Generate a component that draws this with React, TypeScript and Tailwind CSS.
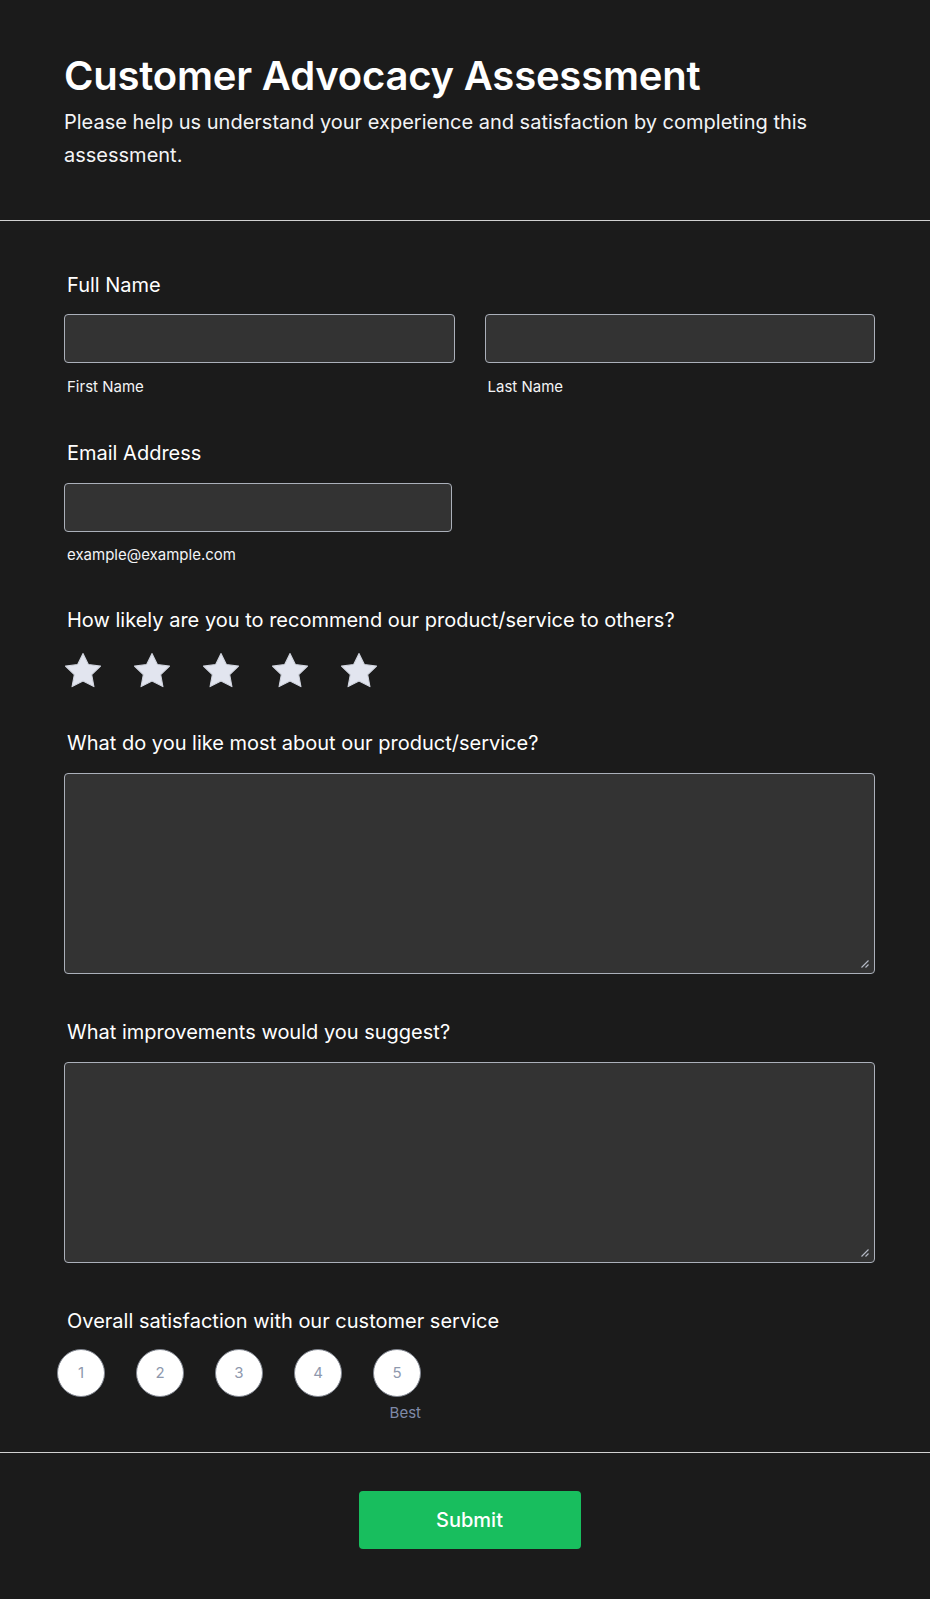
import React from "react";

const font = { fontFamily: "Inter, 'Noto Sans', sans-serif" };

function Star() {
  return (
    <svg width="42" height="40" viewBox="0 0 24 23" className="shrink-0">
      <path
        d="M12 1.4l3.1 6.4 7 .9-5.1 4.9 1.3 6.9L12 17.2l-6.3 3.3 1.3-6.9-5.1-4.9 7-.9z"
        fill="#e2e5ef"
        stroke="#d0d4de"
        strokeWidth="0.6"
        strokeLinejoin="round"
      />
    </svg>
  );
}

function Grip() {
  return (
    <svg
      width="10"
      height="10"
      viewBox="0 0 10 10"
      className="pointer-events-none absolute bottom-[5px] right-[5px]"
    >
      <path d="M1.5 8.5L8.5 1.5M5.5 8.5L8.5 5.5" stroke="#b4b9c4" strokeWidth="1.2" />
    </svg>
  );
}

function TextArea({ className }: { className: string }) {
  return (
    <div className={`relative ${className}`}>
      <textarea className="block h-[201px] w-full resize-none rounded-[4px] border border-[#abb0ba] bg-[#333333] p-3 text-white outline-none" />
      <Grip />
    </div>
  );
}

export default function App() {
  const ratings = [1, 2, 3, 4, 5];

  return (
    <div className="min-h-[1599px] w-[930px] bg-[#1b1b1b] text-white" style={font}>
      {/* Header */}
      <div className="pl-16 pr-[55px] pt-[52px] pb-[48px]">
        <h1 className="text-[40px] font-semibold leading-[48px] tracking-[-0.2px]">
          Customer Advocacy Assessment
        </h1>
        <p className="mt-[6px] text-[20px] leading-[33px] text-[#f3f4f6]">
          Please help us understand your experience and satisfaction by completing this assessment.
        </p>
      </div>

      <div className="h-px bg-[#d1d1d1]" />

      {/* Form */}
      <div className="pl-16 pr-[55px] pt-[50px] pb-[30px]">
        {/* Full name */}
        <div>
          <label className="block pl-[3px] text-[20px] leading-[28px]">Full Name</label>
          <div className="mt-[15px] grid grid-cols-2 gap-[30px]">
            <div>
              <input className="block h-[49px] w-full rounded-[4px] border border-[#abb0ba] bg-[#333333] px-3 text-white outline-none" />
              <div className="mt-[14px] pl-[3px] text-[15px] leading-[20px] text-[#f3f4f6]">First Name</div>
            </div>
            <div>
              <input className="block h-[49px] w-full rounded-[4px] border border-[#abb0ba] bg-[#333333] px-3 text-white outline-none" />
              <div className="mt-[14px] pl-[3px] text-[15px] leading-[20px] text-[#f3f4f6]">Last Name</div>
            </div>
          </div>
        </div>

        {/* Email */}
        <div className="mt-[42px]">
          <label className="block pl-[3px] text-[20px] leading-[28px]">Email Address</label>
          <div className="mt-[16px] w-[388px]">
            <input className="block h-[49px] w-full rounded-[4px] border border-[#abb0ba] bg-[#333333] px-3 text-white outline-none" />
            <div className="mt-[13px] pl-[3px] text-[15px] leading-[20px] text-[#f3f4f6]">example@example.com</div>
          </div>
        </div>

        {/* Stars */}
        <div className="mt-[41px]">
          <label className="block pl-[3px] text-[20px] leading-[28px]">
            How likely are you to recommend our product/service to others?
          </label>
          <div className="-ml-[2px] mt-[17px] flex gap-[27px]">
            {ratings.map((r) => (
              <Star key={r} />
            ))}
          </div>
        </div>

        {/* Like most */}
        <div className="mt-[38px]">
          <label className="block pl-[3px] text-[20px] leading-[28px]">
            What do you like most about our product/service?
          </label>
          <TextArea className="mt-[16px]" />
        </div>

        {/* Improvements */}
        <div className="mt-[44px]">
          <label className="block pl-[3px] text-[20px] leading-[28px]">
            What improvements would you suggest?
          </label>
          <TextArea className="mt-[16px]" />
        </div>

        {/* Satisfaction */}
        <div className="mt-[44px]">
          <label className="block pl-[3px] text-[20px] leading-[28px]">
            Overall satisfaction with our customer service
          </label>
          <div className="-ml-[7px] mt-[14px] inline-flex flex-col">
            <div className="flex gap-[31px]">
              {ratings.map((r) => (
                <button
                  key={r}
                  className="flex h-[48px] w-[48px] items-center justify-center rounded-full border border-[#80858f] bg-white text-[15px] text-[#8e98ad]"
                >
                  {r}
                </button>
              ))}
            </div>
            <div className="mt-[7px] self-end text-[15px] leading-[18px] text-[#7f8aa8]">Best</div>
          </div>
        </div>
      </div>

      <div className="h-px bg-[#d1d1d1]" />

      {/* Footer */}
      <div className="flex justify-center pl-16 pr-[55px] pt-[38px] pb-[50px]">
        <button className="h-[58px] w-[222px] rounded-[4px] bg-[#18be5e] text-[20px] font-medium text-white">
          Submit
        </button>
      </div>
    </div>
  );
}
